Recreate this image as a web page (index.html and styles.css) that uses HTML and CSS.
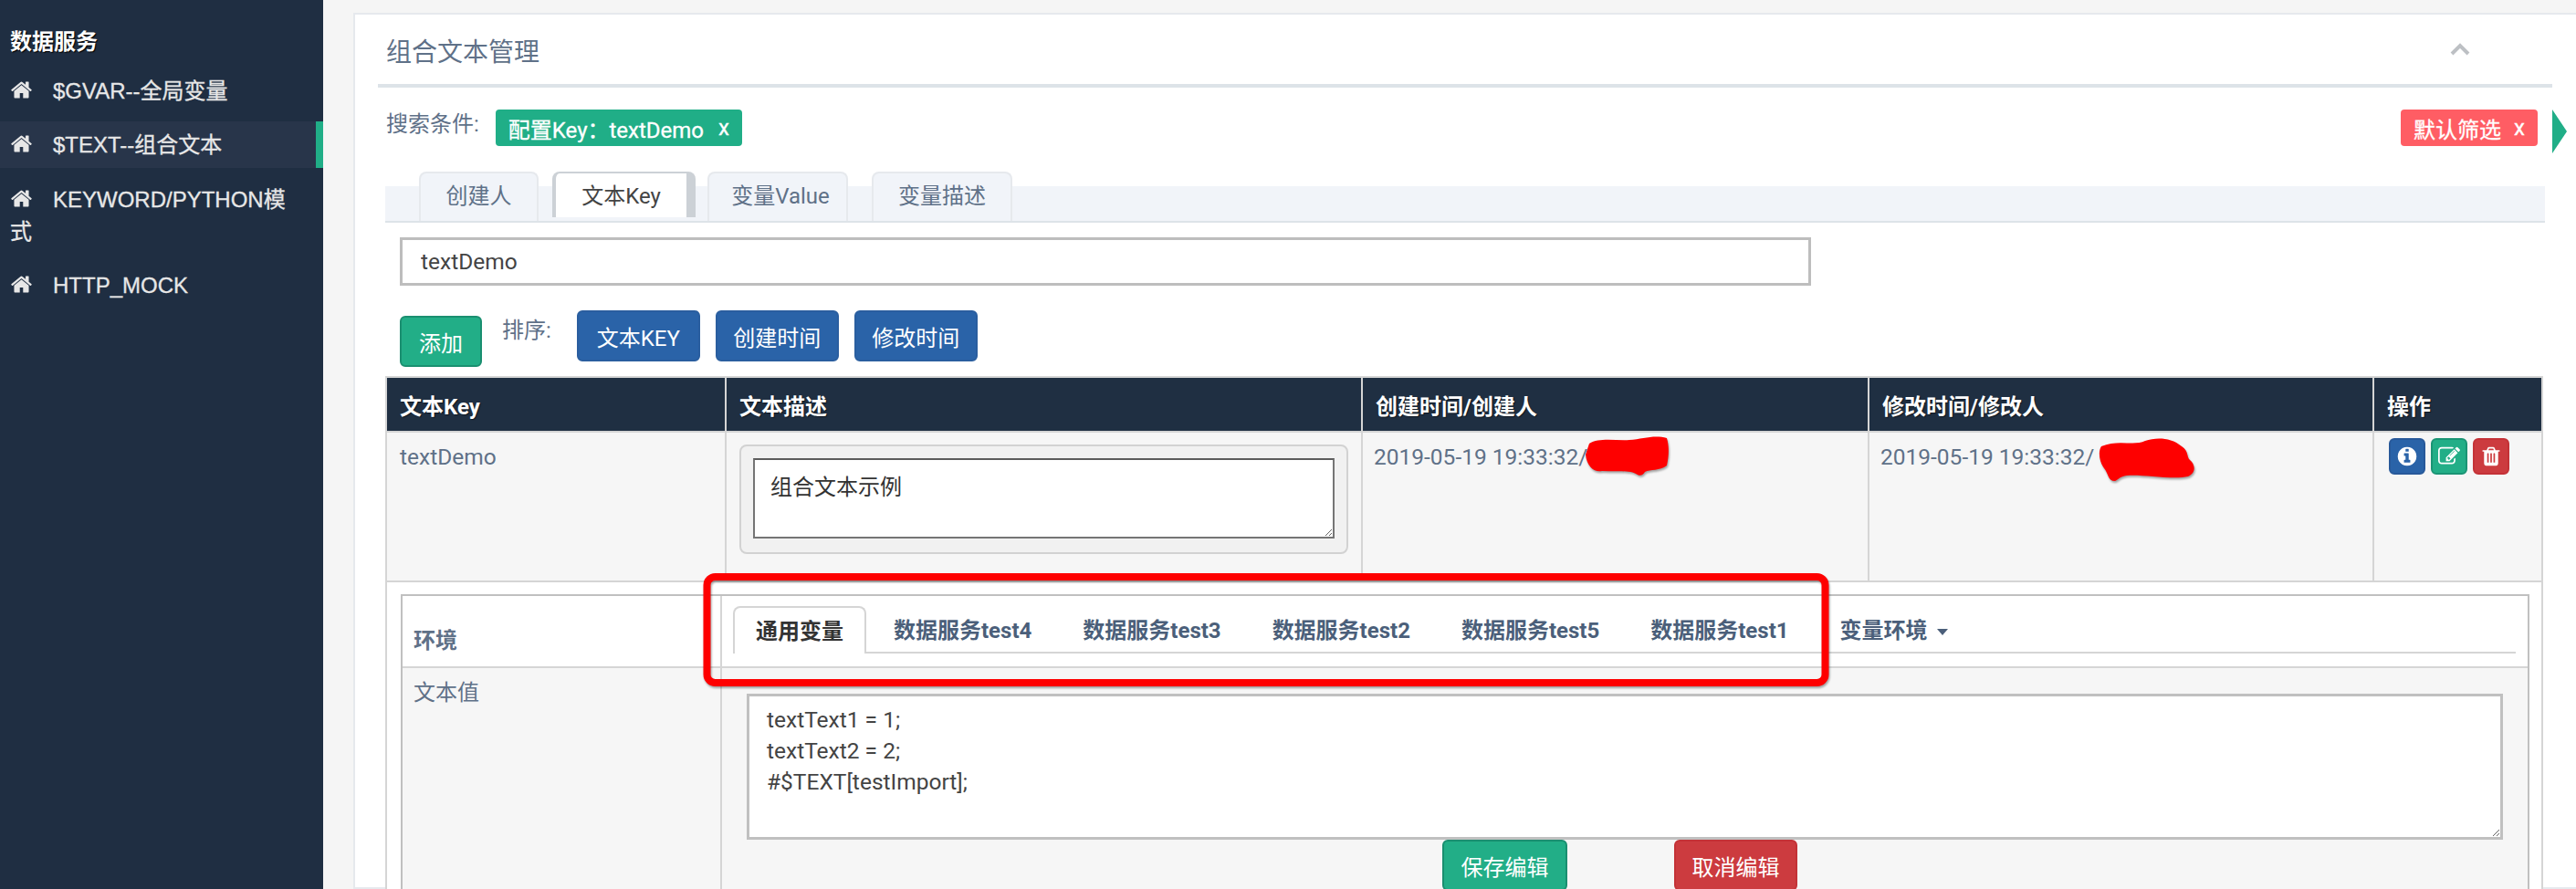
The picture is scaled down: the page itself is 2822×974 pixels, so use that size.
FILE: index.html
```html
<!DOCTYPE html>
<html lang="zh-CN">
<head>
<meta charset="utf-8">
<title>组合文本管理</title>
<link rel="stylesheet" href="styles.css">
</head>
<body>
<svg width="0" height="0" class="defs">
  <symbol id="i-home" viewBox="0 0 1792 1792"><path d="M1472 992v480q0 26-19 45t-45 19h-384v-384h-256v384h-384q-26 0-45-19t-19-45v-480q0-1 .5-3t.5-3l575-474 575 474q1 2 1 6zm223-69l-62 74q-8 9-21 11h-3q-13 0-21-7l-692-577-692 577q-12 8-24 7-13-2-21-11l-62-74q-8-10-7-23.500t11-21.500l719-599q32-26 76-26t76 26l244 204v-195q0-14 9-23t23-9h192q14 0 23 9t9 23v408l219 182q10 8 11 21.500t-7 23.500z"/></symbol>
</svg>
<div class="app">
  <aside class="sidebar">
    <h3 class="side-title">数据服务</h3>
    <ul class="menu">
      <li class="menu-item"><svg class="home"><use href="#i-home"/></svg>$GVAR--全局变量</li>
      <li class="menu-item active"><svg class="home"><use href="#i-home"/></svg>$TEXT--组合文本</li>
      <li class="menu-item wrap"><svg class="home"><use href="#i-home"/></svg>KEYWORD/PYTHON模式</li>
      <li class="menu-item"><svg class="home"><use href="#i-home"/></svg>HTTP_MOCK</li>
    </ul>
  </aside>
  <main class="main">
    <section class="panel">
      <header class="panel-title">
        <h2>组合文本管理</h2>
        <svg class="chevron" viewBox="0 0 22 14"><polyline points="2,12 11,3 20,12"/></svg>
      </header>
      <div class="search-row">
        <span class="search-label">搜索条件:</span>
        <span class="tag tag-green">配置Key：textDemo<i>x</i></span>
        <span class="tag tag-red">默认筛选<i>x</i></span>
        <span class="arrow"></span>
      </div>
      <nav class="tabbar">
        <a class="tab tab-first">创建人</a>
        <a class="tab tab-active">文本Key</a>
        <a class="tab tab-value">变量Value</a>
        <a class="tab tab-last">变量描述</a>
      </nav>
      <input class="filter" type="text" value="textDemo">
      <div class="actions">
        <button class="btn btn-green btn-add">添加</button>
        <span class="sort-label">排序:</span>
        <button class="btn btn-blue">文本KEY</button>
        <button class="btn btn-blue">创建时间</button>
        <button class="btn btn-blue">修改时间</button>
      </div>
      <table class="grid">
        <colgroup><col class="c1"><col class="c2"><col class="c3"><col class="c4"><col class="c5"></colgroup>
        <thead>
          <tr><th>文本Key</th><th>文本描述</th><th>创建时间/创建人</th><th>修改时间/修改人</th><th>操作</th></tr>
        </thead>
        <tbody>
          <tr class="data-row">
            <td class="cell-key">textDemo</td>
            <td class="cell-desc"><div class="well"><textarea class="desc">组合文本示例</textarea></div></td>
            <td class="cell-date">2019-05-19 19:33:32/</td>
            <td class="cell-date">2019-05-19 19:33:32/</td>
            <td class="cell-ops">
              <div class="ops">
                <span class="op op-blue"><svg viewBox="0 0 1792 1792"><path d="M1152 1376v-160q0-14-9-23t-23-9h-96v-512q0-14-9-23t-23-9h-320q-14 0-23 9t-9 23v160q0 14 9 23t23 9h96v320h-96q-14 0-23 9t-9 23v160q0 14 9 23t23 9h448q14 0 23-9t9-23zm-128-896v-160q0-14-9-23t-23-9h-192q-14 0-23 9t-9 23v160q0 14 9 23t23 9h192q14 0 23-9t9-23zm640 416q0 209-103 385.500t-279.500 279.500-385.500 103-385.500-103-279.500-279.500-103-385.500 103-385.500 279.500-279.500 385.500-103 385.500 103 279.500 279.500 103 385.500z"/></svg></span>
                <span class="op op-green"><svg viewBox="0 0 1792 1792"><path d="M888 1184l116-116-152-152-116 116v56h96v96h56zm440-720q-16-16-33 1l-350 350q-17 17-1 33t33-1l350-350q17-17 1-33zm80 594v190q0 119-84.500 203.500t-203.500 84.500h-832q-119 0-203.500-84.500t-84.500-203.500v-832q0-119 84.500-203.500t203.500-84.500h832q63 0 117 25 15 7 18 23 3 17-9 29l-49 49q-14 14-32 8-23-6-45-6h-832q-66 0-113 47t-47 113v832q0 66 47 113t113 47h832q66 0 113-47t47-113v-126q0-13 9-22l64-64q15-15 35-7t20 29zm-96-738l288 288-672 672h-288v-288zm444 132l-92 92-288-288 92-92q28-28 68-28t68 28l152 152q28 28 28 68t-28 68z"/></svg></span>
                <span class="op op-red"><svg viewBox="0 0 1792 1792"><path d="M704 1376v-704q0-14-9-23t-23-9h-64q-14 0-23 9t-9 23v704q0 14 9 23t23 9h64q14 0 23-9t9-23zm256 0v-704q0-14-9-23t-23-9h-64q-14 0-23 9t-9 23v704q0 14 9 23t23 9h64q14 0 23-9t9-23zm256 0v-704q0-14-9-23t-23-9h-64q-14 0-23 9t-9 23v704q0 14 9 23t23 9h64q14 0 23-9t9-23zm-544-992h448l-48-117q-7-9-17-11h-317q-10 2-17 11zm928 32v64q0 14-9 23t-23 9h-96v948q0 83-47 143.500t-113 60.500h-832q-66 0-113-58.500t-47-141.500v-952h-96q-14 0-23-9t-9-23v-64q0-14 9-23t23-9h309l70-167q15-37 54-63t79-26h320q40 0 79 26t54 63l70 167h309q14 0 23 9t9 23z"/></svg></span>
              </div>
            </td>
          </tr>
          <tr>
            <td colspan="5" class="cell-nested">
              <table class="inner">
                <colgroup><col class="ic1"><col></colgroup>
                <tr>
                  <td class="env-label">环境</td>
                  <td class="env-tabs">
                    <ul class="env-nav">
                      <li class="env-tab env-active">通用变量</li>
                      <li class="env-tab">数据服务test4</li>
                      <li class="env-tab">数据服务test3</li>
                      <li class="env-tab">数据服务test2</li>
                      <li class="env-tab">数据服务test5</li>
                      <li class="env-tab">数据服务test1</li>
                      <li class="env-tab">变量环境<b class="caret"></b></li>
                    </ul>
                  </td>
                </tr>
                <tr class="value-row">
                  <td class="value-label">文本值</td>
                  <td class="value-cell">
                    <textarea class="value">textText1 = 1;
textText2 = 2;
#$TEXT[testImport];</textarea>
                    <div class="edit-actions">
                      <button class="btn btn-green btn-save">保存编辑</button>
                      <button class="btn btn-red">取消编辑</button>
                    </div>
                  </td>
                </tr>
              </table>
            </td>
          </tr>
        </tbody>
      </table>
    </section>
  </main>
  <svg class="annot" viewBox="0 0 2822 974">
    <g class="marks">
      <rect x="774.500" y="632" width="1225" height="116" rx="9"/>
      <path class="blob" d="M1741 486C1752 479 1770 483 1785 482C1800 481 1812 476 1826 480C1829 490 1828 501 1826 510C1818 516 1808 514 1802 517C1800 521 1796 522 1792 519C1785 515 1770 517 1755 516C1745 518 1738 509 1737 498Z"/>
      <path class="blob" d="M2302 489C2320 481 2338 489 2350 483C2362 479 2378 479 2390 489C2398 494 2395 500 2399 504C2406 510 2405 519 2397 522C2380 526 2345 519 2330 521C2322 522 2320 526 2317 527C2309 527 2310 519 2305 513C2300 506 2298 495 2302 489Z"/>
    </g>
  </svg>
</div>
</body>
</html>
```

FILE: styles.css
```css
* { box-sizing: border-box; }
html, body { margin: 0; height: 100%; }
body {
  font-family: Roboto, "Noto Sans CJK SC", sans-serif;
  font-size: 24.500px;
  color: #5f7188;
  background: #f5f5f5;
  overflow: hidden;
}
.defs { position: absolute; }
.app { position: relative; display: flex; width: 2822px; height: 974px; overflow: hidden; }

/* sidebar */
.sidebar {
  flex: 0 0 354px;
  background: #1f2e42;
  padding-top: 28px;
  color: #e7e7e7;
  font-family: "Liberation Sans", "Noto Sans CJK SC", sans-serif;
}
.side-title {
  margin: 0 0 11px;
  padding-left: 11px;
  font-size: 24px;
  line-height: 35px;
  font-weight: 700;
  color: #fff;
  text-shadow: 1px 1px 1px #000;
}
.menu { list-style: none; margin: 0; padding: 0; display: flex; flex-direction: column; gap: 8px; }
.menu-item { padding: 8px 24px 8px 11px; line-height: 35px; font-size: 24px; -webkit-text-stroke: .3px #e7e7e7; }
.menu-item.active { background: #28354a; border-right: 8px solid #20ae87; padding-right: 16px; }
.menu-item.wrap { margin-top: 1px; }
.home { width: 25px; height: 25px; margin-right: 22px; fill: #e7e7e7; vertical-align: -3px; }

/* panel */
.main { flex: 1; min-width: 0; padding: 14px 0 0 33px; }
.panel {
  height: 960px;
  background: #fff;
  border: 2px solid #e6e9ed;
  border-right: 0;
  padding: 0 10px 0 25px;
}
.panel-title {
  display: flex;
  align-items: center;
  justify-content: space-between;
  height: 80px;
  margin-right: 16px;
  padding: 0 90px 0 9px;
  border-bottom: 4px solid #dde3e8;
}
.panel-title h2 { margin: 0; font-size: 28px; font-weight: 400; color: #5f7188; position: relative; top: 1px; }
.chevron { width: 22px; height: 14px; fill: none; stroke: #bdc0c4; stroke-width: 4; }

.search-row { display: flex; align-items: flex-start; margin-top: 24px; padding-left: 9px; height: 48px; }
.search-label { line-height: 32px; font-size: 24px; margin-right: 18px; }
.tag {
  display: inline-flex;
  align-items: center;
  height: 40px;
  padding: 0 14px;
  border-radius: 4px;
  color: #fff;
  font-size: 24px;
  -webkit-text-stroke: .3px #fff;
}
.tag i { font-style: normal; margin-left: 14px; }
.tag-green { background: #20ae87; }
.tag-green i { margin-left: 16px; }
.tag-red { background: #ff5d64; margin-left: auto; margin-right: 16px; }
.arrow { width: 0; height: 0; border-left: 16px solid #20ae87; border-top: 24px solid transparent; border-bottom: 24px solid transparent; }

.tabbar {
  display: flex;
  height: 56px;
  margin: 20px 24px 0 8px;
  padding-left: 37px;
  gap: 15px;
  background: linear-gradient(transparent 16px, #f1f4f9 16px);
  border-bottom: 2px solid #dde3e8;
}
.tab {
  display: block;
  width: 154px;
  height: 54px;
  background: #f1f4f9;
  border: 2px solid #e6e9ed;
  border-width: 2px 2px 0 2px;
  border-radius: 8px 8px 0 0;
  line-height: 50px;
  font-size: 24px;
  text-align: center;
}
.tab-first { width: 131px; }
.tab-active {
  width: 157px;
  height: 50px;
  background: #fff;
  color: #444;
  border: 4px solid #ccd1d6;
  border-width: 2px 10px 0 4px;
  margin-right: -2px;
}
.tab-value { padding-left: 6px; }
.tab-last { margin-left: 11px; }

.filter {
  display: block;
  width: 1546px;
  height: 53px;
  margin: 16px 0 0 24px;
  padding: 0 20px;
  border: 3px solid #bdbdbd;
  background: #fff;
  font: inherit;
  color: #444;
  outline: none;
}

.actions { display: flex; align-items: flex-start; margin: 27px 0 0 24px; gap: 17px; height: 56px; }
.btn {
  height: 56px;
  padding: 0;
  font: inherit;
  font-size: 24px;
  white-space: nowrap;
  color: #fff;
  border: 2px solid;
  border-radius: 6px;
}
.btn-blue { width: 135px; background: #2a63a8; border-color: #2a5e9f; }
.btn-green { background: #22ae87; border-color: #1a8f70; }
.btn-red { width: 135px; background: #cc3b3f; border-color: #c43237; }
.btn-add { width: 90px; margin-top: 6px; margin-right: 5px; }
.sort-label { font-size: 24px; line-height: 32px; margin: 6px 11px 0 0; }

/* table */
.grid {
  table-layout: fixed;
  width: 2364px;
  margin: 16px 0 0 8px;
  border-collapse: separate;
  border-spacing: 0;
  border-top: 2px solid #d5d5d5;
  border-left: 2px solid #d5d5d5;
}
.c1 { width: 372px; }
.c2 { width: 697px; }
.c3 { width: 555px; }
.c4 { width: 553px; }
.grid > thead th, .grid > tbody > tr > td { border-right: 2px solid #d5d5d5; border-bottom: 2px solid #d5d5d5; }
.grid > thead th {
  height: 60px;
  padding: 0 14px;
  background: #1f2f42;
  color: #fff;
  font-size: 24px;
  font-weight: 700;
  text-align: left;
  text-shadow: 1px 1px 1px rgba(0,0,0,.5);
}
.data-row { height: 164px; }
.data-row td { background: #f6f6f6; vertical-align: top; padding: 10px 14px; line-height: 34px; }
.data-row .cell-desc { padding: 13px 14px 0; }
.data-row .cell-date { padding-left: 12px; padding-top: 10px; }
.data-row .cell-ops { padding: 6px 0 0 16px; }
.well { height: 120px; padding: 13px 13px; background: #f1f1f1; border: 2px solid #d2d2d2; border-radius: 8px; }
.desc {
  display: block;
  width: 637px;
  height: 88px;
  padding: 13px 17px 0;
  font: inherit;
  font-size: 24px;
  line-height: 34px;
  color: #333;
  background: #fff;
  border: 2px solid #757575;
  border-top-color: #5c5c5c;
  outline: none;
}
.ops { display: flex; gap: 6px; }
.op {
  display: flex;
  align-items: center;
  justify-content: center;
  width: 40px;
  height: 40px;
  border-radius: 6px;
  border: 2px solid;
}
.op svg { width: 24px; height: 24px; fill: #fff; }
.op-blue { background: #2a63a8; border-color: #28599a; }
.op-green { background: #22ae87; border-color: #1a9474; }
.op-red { background: #cc3b3f; border-color: #c43237; }

.cell-nested { padding: 13px 13px 0 15px; background: #fff; vertical-align: top; }
.inner {
  table-layout: fixed;
  width: 2332px;
  border-collapse: separate;
  border-spacing: 0;
  border-top: 2px solid #c0c0c0;
  border-left: 2px solid #c0c0c0;
  border-right: 2px solid #c0c0c0;
}
.ic1 { width: 350px; }
.inner td { vertical-align: top; }
.env-label { height: 79px; padding: 32px 12px 0; font-weight: 700; font-size: 24px; line-height: 34px; border-right: 2px solid #d5d5d5; border-bottom: 2px solid #d5d5d5; }
.env-tabs { padding: 11px 13px 0 12px; border-bottom: 2px solid #d5d5d5; }
.env-nav { list-style: none; margin: 0; padding: 0; display: flex; height: 52px; border-bottom: 2px solid #d5d5d5; }
.env-tab { padding: 0 28px; font-weight: 700; font-size: 24px; line-height: 54px; color: #4b5f7a; height: 52px; white-space: nowrap; }
.env-active {
  width: 146px;
  padding: 0 23px;
  margin-right: 2px;
  height: 52px;
  color: #333;
  background: #fff;
  border: 2px solid #d5d5d5;
  border-bottom: 0;
  border-radius: 8px 8px 0 0;
  line-height: 52px;
}
.caret { display: inline-block; width: 0; height: 0; margin-left: 10px; vertical-align: 3px; border-top: 7px solid #4b5f7a; border-left: 6px solid transparent; border-right: 6px solid transparent; }
.value-row td { background: #f6f6f6; height: 340px; }
.value-label { padding: 10px 12px; border-right: 2px solid #d5d5d5; line-height: 34px; font-size: 24px; }
.value-cell { padding: 28px 27px 0 27px; }
.value {
  display: block;
  width: 1924px;
  height: 160px;
  padding: 9px 19px;
  font: inherit;
  line-height: 34px;
  color: #444;
  background: #fff;
  border: 3px solid #c0c0c0;
  outline: none;
}
.edit-actions { display: flex; gap: 117px; margin-left: 762px; }
.btn-save { width: 137px; }

/* annotation layer */
.annot { position: absolute; left: 0; top: 0; width: 2822px; height: 974px; pointer-events: none; }
.marks { filter: drop-shadow(1px 2px 1px rgba(0,0,0,.35)); }
.marks rect { fill: none; stroke: #fe0000; stroke-width: 8; }
.marks .blob { fill: #fe0000; }
```
